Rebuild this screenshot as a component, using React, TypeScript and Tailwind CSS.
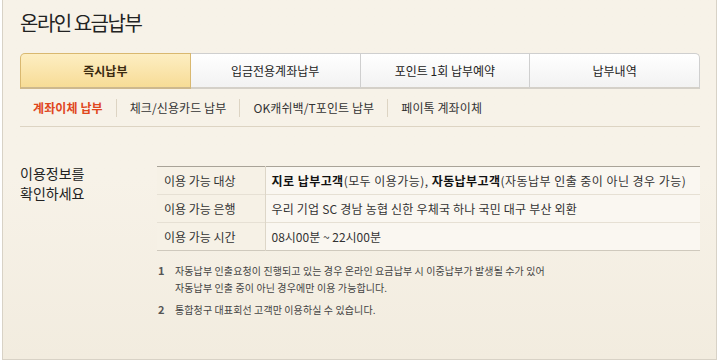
const font = { fontFamily: '"Noto Sans CJK KR", "Noto Sans", sans-serif' }

const tabs = ["즉시납부", "입금전용계좌납부", "포인트 1회 납부예약", "납부내역"]
const subs = ["계좌이체 납부", "체크/신용카드 납부", "OK캐쉬백/T포인트 납부", "페이톡 계좌이체"]

export default function App() {
  return (
    <div className="h-[362px] w-[720px] overflow-hidden bg-white" style={font}>
      <div className="ml-[2px] h-[360px] w-[715px] border-l border-b border-r border-[#d8d2c6] bg-gradient-to-b from-[#f7f2e8] via-[#f7f2e8] to-[#f2ecdf] pl-[17px] pr-[16px]">
        <h1 className="pt-[8px] text-[20px] leading-[30px] tracking-[-1.5px] text-[#222]">온라인 요금납부</h1>

        <div className="mt-[15px] flex h-[36px] w-[680px]">
          {tabs.map((t, i) => (
            <div
              key={t}
              className={
                i === 0
                  ? "flex flex-1 items-center justify-center rounded-tl-[5px] border border-b-2 border-[#d9b870] border-b-[#cdb88e] bg-gradient-to-b from-[#fdeec2] to-[#f7dc96] text-[12px] font-bold text-[#3a2a10]"
                  : i === 3
                    ? "flex flex-1 items-center justify-center rounded-tr-[5px] border border-l-0 border-b-2 border-[#cfcfcf] border-b-[#d4d0c8] bg-gradient-to-b from-white to-[#f2f2f2] text-[12px] text-[#222]"
                    : "flex flex-1 items-center justify-center border border-l-0 border-b-2 border-[#cfcfcf] border-b-[#d4d0c8] bg-gradient-to-b from-white to-[#f2f2f2] text-[12px] text-[#222]"
              }
            >
              {t}
            </div>
          ))}
        </div>

        <div className="flex h-[38px] w-[680px] items-center border-b border-[#ddd4c3] pl-[13px] text-[12px] tracking-[0.1px]">
          {subs.map((s, i) => (
            <div key={s} className="flex items-center">
              {i > 0 && <span className="mx-[13px] h-[18px] w-px bg-[#ddd4c3]" />}
              <span className={i === 0 ? "font-bold text-[#e0461c]" : "text-[#333]"}>{s}</span>
            </div>
          ))}
        </div>

        <div className="mt-[36px] flex w-[680px]">
          <div className="w-[137px] text-[14px] leading-[20px] text-[#222]">
            <div>이용정보를</div>
            <div>확인하세요</div>
          </div>
          <div className="flex-1 pt-[3px]">
            <table className="w-full border-collapse text-[12px] text-[#333]">
              <tbody>
                <tr className="border-t border-[#a9a398]">
                  <td className="h-[28px] w-[108px] border-r border-[#ddd6c8] bg-[#f6f1e6] pl-[7px]">이용 가능 대상</td>
                  <td className="bg-[#faf7f1] pl-[6px] tracking-[0.45px]">
                    <b className="text-[#111]">지로 납부고객</b>(모두 이용가능), <b className="text-[#111]">자동납부고객</b>(자동납부 인출 중이 아닌 경우 가능)
                  </td>
                </tr>
                <tr className="border-t border-[#e6e0d4]">
                  <td className="h-[28px] border-r border-[#ddd6c8] bg-[#f6f1e6] pl-[7px]">이용 가능 은행</td>
                  <td className="bg-[#faf7f1] pl-[6px] tracking-[0.2px]">우리 기업 SC 경남 농협 신한 우체국 하나 국민 대구 부산 외환</td>
                </tr>
                <tr className="border-t border-b border-[#e6e0d4] border-b-[#cfc9bd]">
                  <td className="h-[28px] border-r border-[#ddd6c8] bg-[#f6f1e6] pl-[7px]">이용 가능 시간</td>
                  <td className="bg-[#faf7f1] pl-[6px]">08시00분 ~ 22시00분</td>
                </tr>
              </tbody>
            </table>

            <ol className="mt-[11px] text-[10px] leading-[17px] tracking-[0.1px] text-[#444]">
              <li className="flex">
                <span className="w-[18px] pl-[1px] text-[11px] font-bold text-[#555]">1</span>
                <span>
                  자동납부 인출요청이 진행되고 있는 경우 온라인 요금납부 시 이중납부가 발생될 수가 있어
                  <br />
                  자동납부 인출 중이 아닌 경우에만 이용 가능합니다.
                </span>
              </li>
              <li className="mt-[5px] flex">
                <span className="w-[18px] pl-[1px] text-[11px] font-bold text-[#555]">2</span>
                <span>통합청구 대표회선 고객만 이용하실 수 있습니다.</span>
              </li>
            </ol>
          </div>
        </div>
      </div>
    </div>
  )
}
